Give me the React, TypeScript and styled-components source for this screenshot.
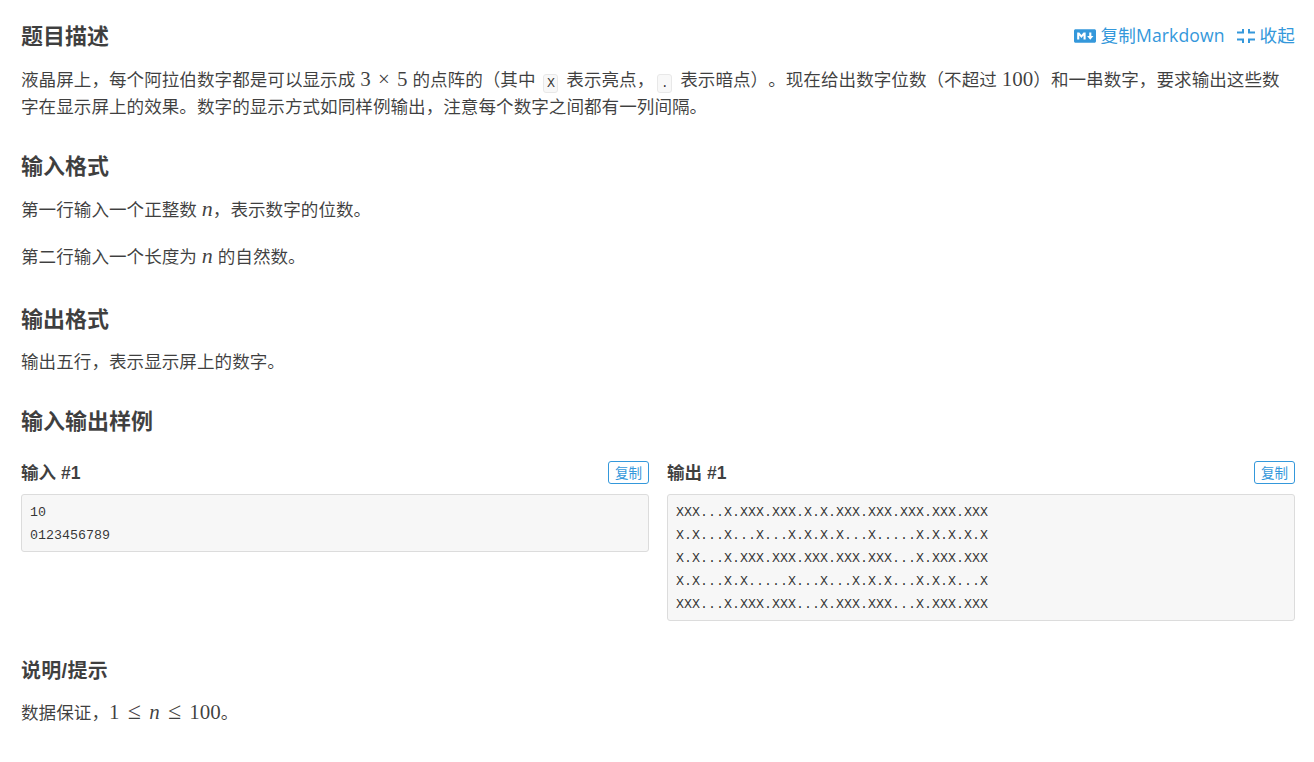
import React from "react";
import styled, { createGlobalStyle } from "styled-components";
import { FaMarkdown } from "react-icons/fa";

const Global = createGlobalStyle`
  html, body { margin: 0; padding: 0; background: #fff; }
  body {
    font-family: "Liberation Sans", "Noto Sans CJK SC", sans-serif;
    color: rgba(0,0,0,.75);
    text-spacing-trim: space-all;
  }
`;
const Page = styled.main`
  box-sizing: border-box;
  width: 1314px;
  height: 762px;
  padding: 20px 19px 0 21px;
  overflow: hidden;
`;
const HeaderRow = styled.div`
  display: flex;
  justify-content: space-between;
  align-items: center;
  height: 33px;
`;
const Heading = styled.h2<{ $top?: number }>`
  margin: ${(p) => p.$top ?? 0}px 0 0;
  font-size: 22px;
  line-height: 33px;
  font-weight: 700;
  color: rgba(0,0,0,.75);
`;
const Actions = styled.div`
  display: flex;
  align-items: center;
  gap: 12px;
  margin-bottom: 4px;
  color: #3498db;
  font-family: "Open Sans", "Noto Sans CJK SC", sans-serif;
  font-size: 17.6px;
  line-height: 30px;
`;
const Action = styled.span`
  display: inline-flex;
  align-items: center;
  gap: 5px;
  letter-spacing: 0.1px;
  svg { margin-top: 2px; }
`;
const Para = styled.p<{ $top?: number }>`
  margin: ${(p) => p.$top ?? 0}px 0 0;
  font-size: 17.6px;
  line-height: 27px;
`;
const MathText = styled.span`
  font-family: "Liberation Serif", serif;
  font-size: 21px;
  line-height: 1;
  word-spacing: 2px;
`;
const Ital = styled(MathText)`
  font-style: italic;
  font-size: 22px;
`;
const Relation = styled.span`
  font-size: 24px;
  line-height: 1;
  margin: 0 1px;
`;
const Code = styled.code`
  display: inline-block;
  box-sizing: border-box;
  width: 15px;
  height: 19px;
  margin: 0 3px;
  font-family: "Liberation Mono", monospace;
  font-size: 13.33px;
  line-height: 18px;
  text-align: center;
  background: #f8f8f8;
  border: 1px solid #e8e8e8;
  border-radius: 3px;
  color: rgba(0,0,0,.8);
  vertical-align: -1px;
`;
const Samples = styled.div`
  display: grid;
  grid-template-columns: 628px 628px;
  column-gap: 18px;
  align-items: start;
  margin-top: 20px;
`;
const SampleHead = styled.div`
  display: flex;
  justify-content: space-between;
  align-items: center;
  height: 30px;
  margin-bottom: 6px;
`;
const SampleTitle = styled.h3`
  margin: 0;
  font-size: 17.6px;
  line-height: 26px;
  font-weight: 700;
  color: rgba(0,0,0,.75);
`;
const HintTitle = styled.h3`
  margin: 37px 0 0;
  font-size: 20px;
  line-height: 26px;
  font-weight: 700;
  letter-spacing: 0.3px;
  color: rgba(0,0,0,.75);
`;
const CopyButton = styled.button`
  box-sizing: border-box;
  width: 41px;
  height: 23px;
  margin-top: -2px;
  padding: 0;
  background: #fff;
  border: 1px solid #3498db;
  border-radius: 3px;
  color: #3498db;
  font: 13.5px/21px "Noto Sans CJK SC", sans-serif;
`;
const Pre = styled.pre`
  margin: 0;
  padding: 6px 8px 4px;
  background: #f7f7f7;
  border: 1px solid #dcdcdc;
  border-radius: 3px;
  font-family: "Liberation Mono", monospace;
  font-size: 13.33px;
  line-height: 23px;
  color: rgba(0,0,0,.8);
`;

const CollapseIcon = () => (
  <svg width="18" height="14" viewBox="0 0 18 14" fill="none" stroke="#3498db" strokeWidth="2">
    <path d="M0 3.5H6V0M0 10.5H6V14M18 3.5H12V0M18 10.5H12V14" />
  </svg>
);

const output = `XXX...X.XXX.XXX.X.X.XXX.XXX.XXX.XXX.XXX
X.X...X...X...X.X.X.X...X.....X.X.X.X.X
X.X...X.XXX.XXX.XXX.XXX.XXX...X.XXX.XXX
X.X...X.X.....X...X...X.X.X...X.X.X...X
XXX...X.XXX.XXX...X.XXX.XXX...X.XXX.XXX`;

export default function App() {
  return (
    <Page>
      <Global />
      <HeaderRow>
        <Heading>题目描述</Heading>
        <Actions>
          <Action><FaMarkdown size={22} />复制Markdown</Action>
          <Action><CollapseIcon />收起</Action>
        </Actions>
      </HeaderRow>
      <Para $top={14}>
        液晶屏上，每个阿拉伯数字都是可以显示成 <MathText>3 × 5</MathText> 的点阵的（其中 <Code>X</Code> 表示亮点，<Code>.</Code> 表示暗点）。现在给出数字位数（不超过 <MathText>100</MathText>）和一串数字，要求输出这些数字在显示屏上的效果。数字的显示方式如同样例输出，注意每个数字之间都有一列间隔。
      </Para>
      <Heading $top={29}>输入格式</Heading>
      <Para $top={14}>第一行输入一个正整数 <Ital>n</Ital>，表示数字的位数。</Para>
      <Para $top={20}>第二行输入一个长度为 <Ital>n</Ital> 的自然数。</Para>
      <Heading $top={32}>输出格式</Heading>
      <Para $top={13}>输出五行，表示显示屏上的数字。</Para>
      <Heading $top={29}>输入输出样例</Heading>
      <Samples>
        <div>
          <SampleHead><SampleTitle>输入 #1</SampleTitle><CopyButton>复制</CopyButton></SampleHead>
          <Pre>{"10\n0123456789"}</Pre>
        </div>
        <div>
          <SampleHead><SampleTitle>输出 #1</SampleTitle><CopyButton>复制</CopyButton></SampleHead>
          <Pre>{output}</Pre>
        </div>
      </Samples>
      <HintTitle>说明/提示</HintTitle>
      <Para $top={15}>数据保证，<MathText>1 <Relation>≤</Relation> <i>n</i> <Relation>≤</Relation> 100</MathText>。</Para>
    </Page>
  );
}
